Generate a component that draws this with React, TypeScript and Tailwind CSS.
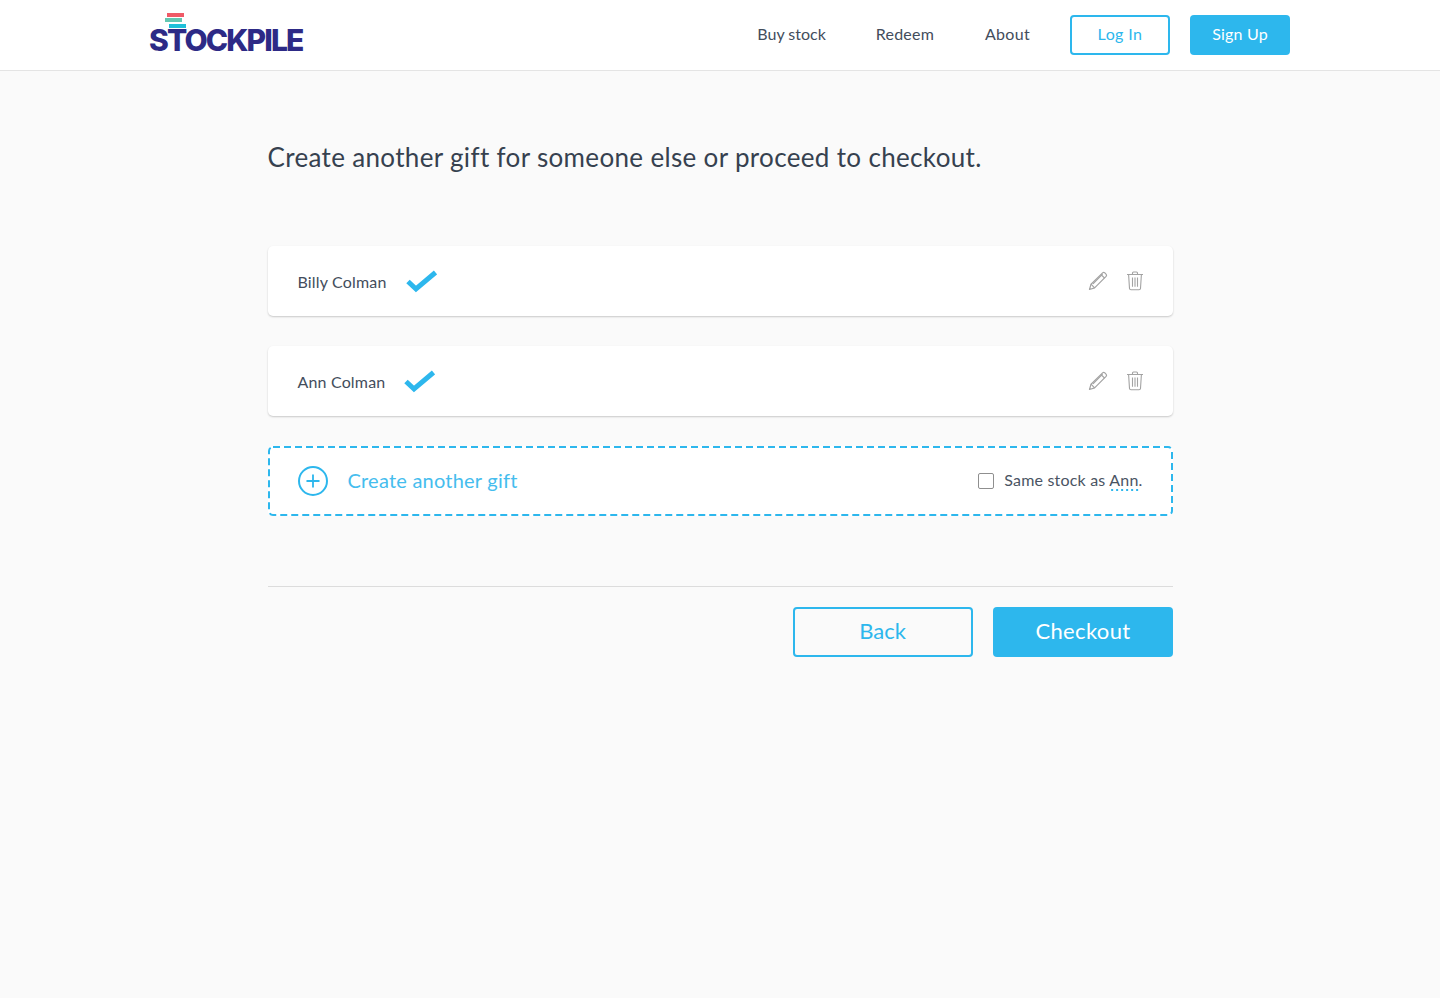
import { Plus } from 'lucide-react';

const sans = "font-['Lato','Noto_Sans',sans-serif]";

function CheckMark() {
  return (
    <svg width="32" height="24" viewBox="0 0 32 24" fill="none" aria-hidden>
      <path d="M3 12.5 L11 20 L30.5 3.5" stroke="#2db7ed" strokeWidth="5" strokeLinejoin="miter" />
    </svg>
  );
}

function PencilIcon() {
  return (
    <svg width="20" height="20" viewBox="0 0 20 20" fill="none" stroke="#a3a3a3" strokeWidth="1.2" aria-hidden>
      <path d="M1.5 18.5 L3 13.2 L14.6 1.9 Q15.6 1 16.6 1.7 L18.2 3.3 Q19 4.3 18.1 5.3 L6.6 16.9 Z" strokeLinejoin="round" />
      <path d="M3 13.2 L6.6 16.9 M13 3.5 L16.6 7.1 M5 12.8 L14.6 3.2" />
    </svg>
  );
}

function TrashIcon() {
  return (
    <svg width="18" height="20" viewBox="0 0 18 20" fill="none" stroke="#a3a3a3" strokeWidth="1.1" aria-hidden>
      <path d="M1 3.5 H17 M6.5 3.5 V2 Q6.5 1 7.5 1 H10.5 Q11.5 1 11.5 2 V3.5" />
      <path d="M2.6 3.5 L3.5 17.5 Q3.6 18.7 5 18.7 H13 Q14.4 18.7 14.5 17.5 L15.4 3.5" />
      <path d="M6.5 6.5 V15.8 M9 6.5 V15.8 M11.5 6.5 V15.8" />
    </svg>
  );
}

function Logo() {
  return (
    <div className="relative h-[70px] w-[155px]">
      <span className="absolute top-[13px] left-[17px] h-[4px] w-[17px] bg-[#ef5a67]" />
      <span className="absolute top-[18px] left-[15px] h-[4px] w-[17px] bg-[#63c7b2]" />
      <span className="absolute top-[24px] left-[19px] h-[4px] w-[17px] bg-[#1fc0da]" />
      <span className="absolute top-[22px] left-[-1px] font-['Inter',sans-serif] text-[30px] leading-[36px] font-extrabold tracking-[-1.85px] text-[#2d2a86]">
        STOCKPILE
      </span>
    </div>
  );
}

function GiftRow({ name, gap }: { name: string; gap: string }) {
  return (
    <div className="flex h-[70px] items-center justify-between rounded-[5px] bg-white pr-[29px] pl-[30px] shadow-[0_1px_2px_rgba(0,0,0,0.2)]">
      <div className={`flex items-center ${gap}`}>
        <span className="pt-[1px] text-[16px] tracking-[0.17px] text-[#434d5c]">{name}</span>
        <CheckMark />
      </div>
      <div className="flex items-center gap-[18px]">
        <PencilIcon />
        <TrashIcon />
      </div>
    </div>
  );
}

export default function App() {
  return (
    <div className={`min-h-[998px] bg-[#fafafa] ${sans}`}>
      <header className="border-b border-[#e4e4e4] bg-white">
        <div className="mx-auto flex h-[70px] w-[1140px] items-center justify-between">
          <Logo />
          <nav className="flex items-center text-[16px] text-[#434d5c]">
            <a className="mr-[50px] pb-[2px]">Buy stock</a>
            <a className="mr-[51px] pb-[2px] tracking-[0.2px]">Redeem</a>
            <a className="mr-[40px] pb-[2px] tracking-[0.3px]">About</a>
            <a className="mr-[20px] flex h-[40px] w-[100px] items-center justify-center rounded-[4px] border-2 border-[#2db7ed] pb-[2px] tracking-[0.4px] text-[#2db7ed]">
              Log In
            </a>
            <a className="flex h-[40px] w-[100px] items-center justify-center rounded-[4px] bg-[#2db7ed] pb-[2px] tracking-[0.2px] text-white">
              Sign Up
            </a>
          </nav>
        </div>
      </header>

      <main className="mx-auto w-[905px] pt-[67px]">
        <h1 className="text-[26px] leading-[38px] font-normal tracking-[0.34px] text-[#36414f]">
          Create another gift for someone else or proceed to checkout.
        </h1>

        <div className="mt-[70px] flex flex-col gap-[30px]">
          <GiftRow name="Billy Colman" gap="gap-[19px]" />
          <GiftRow name="Ann Colman" gap="gap-[18px]" />

          <div className="relative flex h-[70px] items-center justify-between rounded-[5px] bg-white pr-[30px] pl-[30px]">
            <svg className="absolute inset-0" width="905" height="70" viewBox="0 0 905 70" fill="none" aria-hidden>
              <rect x="1" y="1" width="903" height="68" rx="4" stroke="#2db7ed" strokeWidth="2" strokeDasharray="7 4" />
            </svg>
            <div className="flex items-center gap-[20px] text-[#45bdee]">
              <span className="flex h-[30px] w-[30px] items-center justify-center rounded-full border-2 border-[#2db7ed]">
                <Plus size={20} strokeWidth={2.2} color="#2db7ed" />
              </span>
              <span className="pb-[3px] text-[20px] tracking-[0.22px]">Create another gift</span>
            </div>
            <label className="flex items-center gap-[10px] text-[16px] tracking-[0.2px] text-[#4a5463]">
              <span className="h-[16px] w-[16px] rounded-[2px] border border-[#8f8f8f] bg-white" />
              <span className="pb-[2px]">
                Same stock as{' '}
                <span className="bg-[linear-gradient(to_right,#2db7ed_2px,transparent_2px)] bg-[length:5px_2px] bg-bottom bg-repeat-x pb-[2px]">
                  Ann
                </span>
                .
              </span>
            </label>
          </div>
        </div>

        <div className="mt-[70px] flex justify-end gap-[20px] border-t border-[#dcdcdc] pt-[20px]">
          <button className="h-[50px] w-[180px] rounded-[4px] border-2 border-[#2db7ed] pb-[3px] text-[22px] text-[#2db7ed]">
            Back
          </button>
          <button className="h-[50px] w-[180px] rounded-[4px] bg-[#2db7ed] pb-[3px] pl-[1px] text-[22px] tracking-[0.35px] text-white">
            Checkout
          </button>
        </div>
      </main>
    </div>
  );
}
